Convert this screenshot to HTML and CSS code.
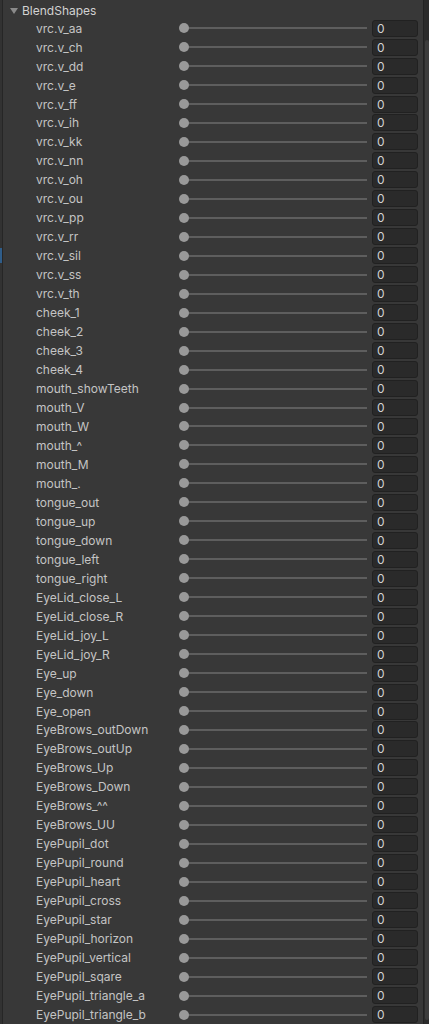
FILE: index.html
```html
<!DOCTYPE html>
<html>
<head>
<meta charset="utf-8">
<link rel="stylesheet" href="styles.css">
</head>
<body>
<div class="panel">
  <div class="gutter"><div class="gutter-mark"></div></div>
  <div class="content">
    <div class="header"><span class="tri"></span><span class="title">BlendShapes</span></div>
    <div class="row"><span class="label">vrc.v_aa</span><div class="slider"><span class="knob"></span></div><div class="field">0</div></div>
    <div class="row"><span class="label">vrc.v_ch</span><div class="slider"><span class="knob"></span></div><div class="field">0</div></div>
    <div class="row"><span class="label">vrc.v_dd</span><div class="slider"><span class="knob"></span></div><div class="field">0</div></div>
    <div class="row"><span class="label">vrc.v_e</span><div class="slider"><span class="knob"></span></div><div class="field">0</div></div>
    <div class="row"><span class="label">vrc.v_ff</span><div class="slider"><span class="knob"></span></div><div class="field">0</div></div>
    <div class="row"><span class="label">vrc.v_ih</span><div class="slider"><span class="knob"></span></div><div class="field">0</div></div>
    <div class="row"><span class="label">vrc.v_kk</span><div class="slider"><span class="knob"></span></div><div class="field">0</div></div>
    <div class="row"><span class="label">vrc.v_nn</span><div class="slider"><span class="knob"></span></div><div class="field">0</div></div>
    <div class="row"><span class="label">vrc.v_oh</span><div class="slider"><span class="knob"></span></div><div class="field">0</div></div>
    <div class="row"><span class="label">vrc.v_ou</span><div class="slider"><span class="knob"></span></div><div class="field">0</div></div>
    <div class="row"><span class="label">vrc.v_pp</span><div class="slider"><span class="knob"></span></div><div class="field">0</div></div>
    <div class="row"><span class="label">vrc.v_rr</span><div class="slider"><span class="knob"></span></div><div class="field">0</div></div>
    <div class="row"><span class="label">vrc.v_sil</span><div class="slider"><span class="knob"></span></div><div class="field">0</div></div>
    <div class="row"><span class="label">vrc.v_ss</span><div class="slider"><span class="knob"></span></div><div class="field">0</div></div>
    <div class="row"><span class="label">vrc.v_th</span><div class="slider"><span class="knob"></span></div><div class="field">0</div></div>
    <div class="row"><span class="label">cheek_1</span><div class="slider"><span class="knob"></span></div><div class="field">0</div></div>
    <div class="row"><span class="label">cheek_2</span><div class="slider"><span class="knob"></span></div><div class="field">0</div></div>
    <div class="row"><span class="label">cheek_3</span><div class="slider"><span class="knob"></span></div><div class="field">0</div></div>
    <div class="row"><span class="label">cheek_4</span><div class="slider"><span class="knob"></span></div><div class="field">0</div></div>
    <div class="row"><span class="label">mouth_showTeeth</span><div class="slider"><span class="knob"></span></div><div class="field">0</div></div>
    <div class="row"><span class="label">mouth_V</span><div class="slider"><span class="knob"></span></div><div class="field">0</div></div>
    <div class="row"><span class="label">mouth_W</span><div class="slider"><span class="knob"></span></div><div class="field">0</div></div>
    <div class="row"><span class="label">mouth_^</span><div class="slider"><span class="knob"></span></div><div class="field">0</div></div>
    <div class="row"><span class="label">mouth_M</span><div class="slider"><span class="knob"></span></div><div class="field">0</div></div>
    <div class="row"><span class="label">mouth_.</span><div class="slider"><span class="knob"></span></div><div class="field">0</div></div>
    <div class="row"><span class="label">tongue_out</span><div class="slider"><span class="knob"></span></div><div class="field">0</div></div>
    <div class="row"><span class="label">tongue_up</span><div class="slider"><span class="knob"></span></div><div class="field">0</div></div>
    <div class="row"><span class="label">tongue_down</span><div class="slider"><span class="knob"></span></div><div class="field">0</div></div>
    <div class="row"><span class="label">tongue_left</span><div class="slider"><span class="knob"></span></div><div class="field">0</div></div>
    <div class="row"><span class="label">tongue_right</span><div class="slider"><span class="knob"></span></div><div class="field">0</div></div>
    <div class="row"><span class="label">EyeLid_close_L</span><div class="slider"><span class="knob"></span></div><div class="field">0</div></div>
    <div class="row"><span class="label">EyeLid_close_R</span><div class="slider"><span class="knob"></span></div><div class="field">0</div></div>
    <div class="row"><span class="label">EyeLid_joy_L</span><div class="slider"><span class="knob"></span></div><div class="field">0</div></div>
    <div class="row"><span class="label">EyeLid_joy_R</span><div class="slider"><span class="knob"></span></div><div class="field">0</div></div>
    <div class="row"><span class="label">Eye_up</span><div class="slider"><span class="knob"></span></div><div class="field">0</div></div>
    <div class="row"><span class="label">Eye_down</span><div class="slider"><span class="knob"></span></div><div class="field">0</div></div>
    <div class="row"><span class="label">Eye_open</span><div class="slider"><span class="knob"></span></div><div class="field">0</div></div>
    <div class="row"><span class="label">EyeBrows_outDown</span><div class="slider"><span class="knob"></span></div><div class="field">0</div></div>
    <div class="row"><span class="label">EyeBrows_outUp</span><div class="slider"><span class="knob"></span></div><div class="field">0</div></div>
    <div class="row"><span class="label">EyeBrows_Up</span><div class="slider"><span class="knob"></span></div><div class="field">0</div></div>
    <div class="row"><span class="label">EyeBrows_Down</span><div class="slider"><span class="knob"></span></div><div class="field">0</div></div>
    <div class="row"><span class="label">EyeBrows_^^</span><div class="slider"><span class="knob"></span></div><div class="field">0</div></div>
    <div class="row"><span class="label">EyeBrows_UU</span><div class="slider"><span class="knob"></span></div><div class="field">0</div></div>
    <div class="row"><span class="label">EyePupil_dot</span><div class="slider"><span class="knob"></span></div><div class="field">0</div></div>
    <div class="row"><span class="label">EyePupil_round</span><div class="slider"><span class="knob"></span></div><div class="field">0</div></div>
    <div class="row"><span class="label">EyePupil_heart</span><div class="slider"><span class="knob"></span></div><div class="field">0</div></div>
    <div class="row"><span class="label">EyePupil_cross</span><div class="slider"><span class="knob"></span></div><div class="field">0</div></div>
    <div class="row"><span class="label">EyePupil_star</span><div class="slider"><span class="knob"></span></div><div class="field">0</div></div>
    <div class="row"><span class="label">EyePupil_horizon</span><div class="slider"><span class="knob"></span></div><div class="field">0</div></div>
    <div class="row"><span class="label">EyePupil_vertical</span><div class="slider"><span class="knob"></span></div><div class="field">0</div></div>
    <div class="row"><span class="label">EyePupil_sqare</span><div class="slider"><span class="knob"></span></div><div class="field">0</div></div>
    <div class="row"><span class="label">EyePupil_triangle_a</span><div class="slider"><span class="knob"></span></div><div class="field">0</div></div>
    <div class="row"><span class="label">EyePupil_triangle_b</span><div class="slider"><span class="knob"></span></div><div class="field">0</div></div>
  </div>
  <div class="scrollbar"><div class="thumb"></div></div>
</div>
</body>
</html>
```

FILE: styles.css
```css
html, body {
  margin: 0;
  padding: 0;
  background: #383838;
  height: 1024px;
  overflow: hidden;
}
.panel {
  display: flex;
  height: 1024px;
  font-family: Inter, "Noto Sans", sans-serif;
  font-size: 12px;
  color: #c4c4c4;
}
.gutter {
  width: 3px;
  background: #323232;
  border-right: 1px solid #262626;
  display: flex;
  flex-direction: column;
  padding-top: 248px;
  box-sizing: border-box;
  flex: none;
}
.gutter-mark {
  width: 2px;
  height: 15px;
  background: #2f5d8a;
}
.content {
  flex: 1;
  display: flex;
  flex-direction: column;
  padding-top: 1.5px;
}
.header {
  height: 19px;
  display: flex;
  align-items: center;
  padding-left: 7px;
}
.tri {
  width: 0;
  height: 0;
  border-left: 4px solid transparent;
  border-right: 4px solid transparent;
  border-top: 6px solid #8a8a8a;
  margin-right: 4px;
  margin-top: 1px;
}
.title {
  color: #d2d2d2;
}
.row {
  height: 18.98px;
  display: flex;
  align-items: center;
  padding-left: 33px;
  flex: none;
}
.label {
  width: 143px;
  flex: none;
  white-space: nowrap;
}
.slider {
  width: 188px;
  height: 10px;
  flex: none;
  display: flex;
  align-items: center;
  background: linear-gradient(#5e5e5e, #5e5e5e) no-repeat 5px 50% / calc(100% - 5px) 2px;
}
.knob {
  width: 10px;
  height: 10px;
  border-radius: 50%;
  background: #999999;
}
.field {
  margin-left: 5px;
  width: 46px;
  height: 17px;
  box-sizing: border-box;
  background: #2a2a2a;
  border: 1px solid #212121;
  border-radius: 3px;
  padding-left: 4px;
  line-height: 15px;
  color: #d2d2d2;
  flex: none;
}
.scrollbar {
  width: 6px;
  margin-left: 3px;
  background: #2b2b2b;
  border-left: 1px solid #232323;
  box-sizing: border-box;
  flex: none;
  display: flex;
  flex-direction: column;
  padding-top: 40px;
}
.thumb {
  height: 980px;
  background: #3d3d3d;
  border-radius: 2px;
  margin-left: 1px;
}
```
